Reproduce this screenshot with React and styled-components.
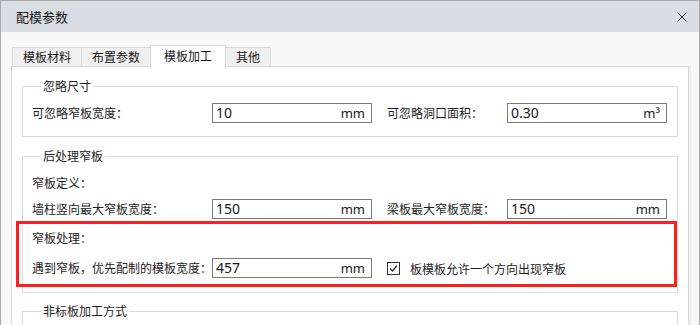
import React from "react";
import styled, { createGlobalStyle } from "styled-components";

const GlobalStyle = createGlobalStyle`
  html, body {
    margin: 0;
    padding: 0;
    background: #ffffff;
  }
  body {
    font-family: "Noto Sans CJK SC", "Noto Sans", sans-serif;
    color: #1e1e1e;
  }
`;

const Dialog = styled.div`
  width: 700px;
  height: 325px;
  box-sizing: border-box;
  border: 1px solid #a9a9a9;
  border-bottom: none;
  display: flex;
  flex-direction: column;
  overflow: hidden;
  background: #f8f8f8;
`;

const TitleBar = styled.div`
  height: 31px;
  flex: none;
  background: #d9dde4;
  display: flex;
  align-items: center;
  justify-content: space-between;
  padding: 0 12px 0 15px;
  font-size: 13px;
  color: #1a1a1a;
`;

const CloseButton = styled.div`
  width: 10px;
  height: 10px;
  display: flex;
  margin-top: 1px;
`;

const Body = styled.div`
  flex: 1;
  display: flex;
  flex-direction: column;
  padding: 13px 10px 0 10px;
  min-height: 0;
`;

const TabStrip = styled.div`
  display: flex;
  align-items: flex-end;
  height: 21px;
  padding-left: 1px;
  flex: none;
`;

const Tab = styled.div`
  box-sizing: border-box;
  height: ${(p) => (p.$active ? "22px" : "19px")};
  margin-bottom: ${(p) => (p.$active ? "-1px" : "0")};
  padding: 0 ${(p) => (p.$active ? "13px" : "10px")};
  border: 1px solid #d9d9d9;
  border-bottom: none;
  margin-left: -1px;
  background: ${(p) => (p.$active ? "#ffffff" : "#f0f0f0")};
  position: relative;
  z-index: ${(p) => (p.$active ? 2 : 1)};
  font-size: 12px;
  line-height: ${(p) => (p.$active ? "20px" : "17px")};
  color: #1a1a1a;
  white-space: nowrap;
  &:first-child {
    margin-left: 0;
  }
`;

const Panel = styled.div`
  flex: 1;
  background: #ffffff;
  border: 1px solid #d9d9d9;
  box-shadow: 2px 0 0 #ececec;
  padding: 12px 10px 0 10px;
`;

const Group = styled.fieldset`
  margin: ${(p) => p.$top || 0}px 0 0 0;
  padding: 10px 9px ${(p) => p.$bottom || 13}px 9px;
  border: 1px solid #dcdcdc;
  min-width: 0;
  min-height: ${(p) => p.$minHeight || 0}px;
`;

const Legend = styled.legend`
  margin-left: 9px;
  padding: 0 2px;
  font-size: 12px;
  line-height: 14px;
  color: #1e1e1e;
`;

const Row = styled.div`
  display: flex;
  align-items: center;
  height: 20px;
  margin-top: ${(p) => p.$gap || 0}px;
`;

const Label = styled.div`
  flex: none;
  width: ${(p) => p.$width}px;
  margin-left: ${(p) => p.$offset || 0}px;
  white-space: nowrap;
  font-size: 12px;
  line-height: 20px;
`;

const Field = styled.div`
  flex: none;
  box-sizing: border-box;
  width: 160px;
  height: 20px;
  border: 1px solid #7a7a7a;
  background: #ffffff;
  display: flex;
  align-items: center;
  justify-content: space-between;
  padding: 0 6px 0 3px;
  font-family: "Noto Sans", "Liberation Sans", sans-serif;
  color: #1a1a1a;
`;

const FieldValue = styled.span`
  font-size: 14px;
  line-height: 18px;
`;

const FieldUnit = styled.span`
  font-size: 13px;
  line-height: 18px;
`;

const Check = styled.label`
  display: flex;
  align-items: center;
  margin-left: 15px;
  font-size: 12px;
  white-space: nowrap;
`;

const CheckBox = styled.span`
  width: 13px;
  height: 13px;
  box-sizing: border-box;
  border: 1px solid #333333;
  background: #ffffff;
  display: flex;
  margin-right: 10px;
`;

const Section = styled.div`
  position: relative;
  margin-top: 9px;
`;

const Highlight = styled.div`
  position: absolute;
  top: -7px;
  left: -16px;
  right: -9px;
  bottom: -9px;
  border: 3px solid #ff1e1e;
  pointer-events: none;
`;

function InputField({ value, unit }) {
  return (
    <Field>
      <FieldValue>{value}</FieldValue>
      <FieldUnit>{unit}</FieldUnit>
    </Field>
  );
}

function App() {
  const tabs = ["模板材料", "布置参数", "模板加工", "其他"];

  return (
    <>
      <GlobalStyle />
      <Dialog>
        <TitleBar>
          <span>配模参数</span>
          <CloseButton>
            <svg width="10" height="10" viewBox="0 0 10 10">
              <path d="M0.5 0.5 L9.5 9.5 M9.5 0.5 L0.5 9.5" stroke="#333" strokeWidth="1" fill="none" />
            </svg>
          </CloseButton>
        </TitleBar>
        <Body>
          <TabStrip>
            {tabs.map((t) => (
              <Tab key={t} $active={t === "模板加工"}>
                {t}
              </Tab>
            ))}
          </TabStrip>
          <Panel>
            <Group>
              <Legend>忽略尺寸</Legend>
              <Row>
                <Label $width={180}>可忽略窄板宽度：</Label>
                <InputField value="10" unit="mm" />
                <Label $width={120} $offset={15}>可忽略洞口面积：</Label>
                <InputField value="0.30" unit="m³" />
              </Row>
            </Group>

            <Group $top={12} $bottom={14}>
              <Legend>后处理窄板</Legend>
              <Row>
                <Label $width={180}>窄板定义：</Label>
              </Row>
              <Row $gap={6}>
                <Label $width={180}>墙柱竖向最大窄板宽度：</Label>
                <InputField value="150" unit="mm" />
                <Label $width={120} $offset={15}>梁板最大窄板宽度：</Label>
                <InputField value="150" unit="mm" />
              </Row>
              <Section>
                <Row>
                  <Label $width={180}>窄板处理：</Label>
                </Row>
                <Row $gap={10}>
                  <Label $width={180}>遇到窄板，优先配制的模板宽度：</Label>
                  <InputField value="457" unit="mm" />
                  <Check>
                    <CheckBox>
                      <svg width="11" height="11" viewBox="0 0 11 11">
                        <path d="M2 5.5 L4.5 8 L9 2.5" stroke="#333" strokeWidth="1.2" fill="none" />
                      </svg>
                    </CheckBox>
                    板模板允许一个方向出现窄板
                  </Check>
                </Row>
                <Highlight />
              </Section>
            </Group>

            <Group $top={11} $minHeight={60}>
              <Legend>非标板加工方式</Legend>
            </Group>
          </Panel>
        </Body>
      </Dialog>
    </>
  );
}

export default App;
